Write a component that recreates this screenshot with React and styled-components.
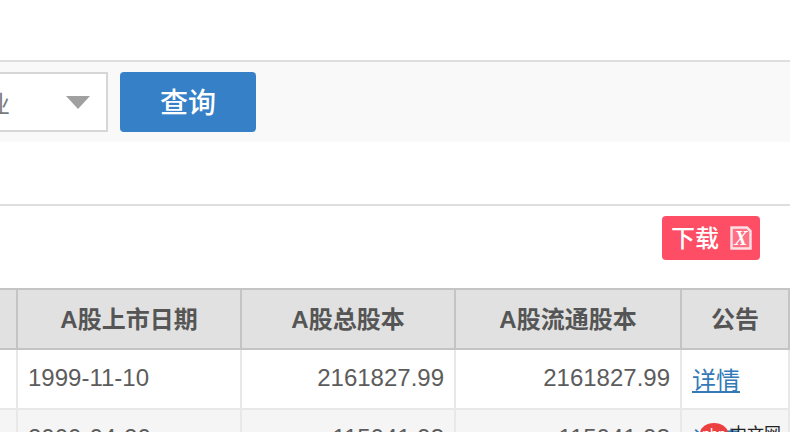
import styled, { createGlobalStyle } from "styled-components";

const GlobalStyle = createGlobalStyle`
  html, body {
    margin: 0;
    padding: 0;
    background: #fff;
    overflow: hidden;
  }
  body {
    width: 790px;
    height: 432px;
    font-family: "Liberation Sans", "Noto Sans CJK SC", sans-serif;
    color: #5c5c5c;
  }
`;

const Page = styled.div`
  position: relative;
  width: 790px;
  height: 432px;
  overflow: hidden;
`;

const TopGap = styled.div`
  height: 60px;
`;

const SearchBar = styled.div`
  display: flex;
  align-items: flex-start;
  gap: 12px;
  height: 70px;
  padding-top: 10px;
  background: #f9f9f9;
  border-top: 2px solid #dedede;
`;

const SelectBox = styled.div`
  display: flex;
  align-items: center;
  justify-content: space-between;
  box-sizing: border-box;
  flex-shrink: 0;
  width: 200px;
  height: 60px;
  margin-left: -92px;
  padding: 0 16px 0 4px;
  background: #fff;
  border: 2px solid #d6d6d6;
  font-size: 24px;
  color: #7a7a7a;
`;

const Arrow = styled.span`
  width: 0;
  height: 0;
  border-left: 12px solid transparent;
  border-right: 12px solid transparent;
  border-top: 13px solid #a0a0a0;
`;

const SearchButton = styled.button`
  width: 136px;
  height: 60px;
  padding: 0 0 2px;
  border: 0;
  border-radius: 4px;
  background: #3580c6;
  color: #fff;
  font-family: inherit;
  font-size: 28px;
  font-weight: 500;
`;

const ActionBar = styled.div`
  display: flex;
  justify-content: flex-end;
  height: 70px;
  margin-top: 62px;
  padding: 10px 30px 0 0;
  border-top: 2px solid #dedede;
`;

const DownloadButton = styled.button`
  display: flex;
  align-items: center;
  gap: 11px;
  height: 44px;
  padding: 0 8px 0 9px;
  border: 0;
  border-radius: 4px;
  background: #fe4e66;
  color: #fff;
  font-family: inherit;
  font-size: 24px;
  font-weight: 500;
`;

const DownloadLabel = styled.span`
  margin-top: -3px;
`;

const TableWrap = styled.div`
  display: flex;
  justify-content: flex-end;
  margin-top: 2px;
`;

const Table = styled.table`
  flex-shrink: 0;
  width: 983px;
  table-layout: fixed;
  border-collapse: collapse;
  font-size: 24px;
`;

const HeadCell = styled.th`
  height: 55px;
  padding: 0 0 3px;
  background: #e1e1e1;
  border: 2px solid #c4c4c4;
  color: #555;
  font-weight: 700;
  text-align: center;
`;

const Cell = styled.td`
  height: 56px;
  padding: 0 10px 2px;
  border: 2px solid #e8e8e8;
  text-align: ${(p) => (p.$right ? "right" : "left")};
  background: ${(p) => (p.$alt ? "#f5f5f5" : "#fff")};
`;

const DetailLink = styled.a`
  color: #337ab7;
  text-decoration: underline;
`;

const Watermark = styled.div`
  position: absolute;
  left: 700px;
  top: 423px;
  display: flex;
  align-items: flex-start;
  gap: 2px;
  font-family: "Noto Sans CJK SC", sans-serif;
  font-size: 17px;
  line-height: 20px;
  color: #222;
`;

const WatermarkPill = styled.span`
  display: flex;
  align-items: center;
  justify-content: center;
  width: 28px;
  height: 21px;
  border-radius: 50%;
  background: #ec3f3f;
  color: #fff;
  font-family: "Liberation Sans", sans-serif;
  font-size: 14px;
`;

const ExcelIcon = () => (
  <svg width="22" height="24" viewBox="0 0 22 24" fill="none">
    <path d="M1.500 1.500h15.500l3.500 3.500V22.500H1.500z" fill="#fff" fillOpacity="0.2" stroke="#fff" strokeOpacity="0.8" strokeWidth="2.500" />
    <text x="11" y="18.500" textAnchor="middle" fill="#fff" fontFamily="Liberation Serif" fontStyle="italic" fontWeight="700" fontSize="20">X</text>
  </svg>
);

const rows = [
  { date: "2000-04-20", total: "115041.93", flow: "115041.93" },
];

export default function App() {
  return (
    <Page>
      <GlobalStyle />
      <TopGap />
      <SearchBar>
        <SelectBox>
          <span>全部行业</span>
          <Arrow />
        </SelectBox>
        <SearchButton>查询</SearchButton>
      </SearchBar>
      <ActionBar>
        <DownloadButton>
          <DownloadLabel>下载</DownloadLabel>
          <ExcelIcon />
        </DownloadButton>
      </ActionBar>
      <TableWrap>
        <Table>
          <colgroup>
            <col style={{ width: 211 }} />
            <col style={{ width: 224 }} />
            <col style={{ width: 214 }} />
            <col style={{ width: 226 }} />
            <col style={{ width: 108 }} />
          </colgroup>
          <thead>
            <tr>
              <HeadCell>A股简称</HeadCell>
              <HeadCell>A股上市日期</HeadCell>
              <HeadCell>A股总股本</HeadCell>
              <HeadCell>A股流通股本</HeadCell>
              <HeadCell>公告</HeadCell>
            </tr>
          </thead>
          <tbody>
            <tr>
              <Cell>浦发银行</Cell>
              <Cell>1999-11-10</Cell>
              <Cell $right>2161827.99</Cell>
              <Cell $right>2161827.99</Cell>
              <Cell><DetailLink href="#">详情</DetailLink></Cell>
            </tr>
            {rows.map((r) => (
              <tr key={r.date}>
                <Cell $alt>浦发银行</Cell>
                <Cell $alt>{r.date}</Cell>
                <Cell $alt $right>{r.total}</Cell>
                <Cell $alt $right>{r.flow}</Cell>
                <Cell $alt><DetailLink href="#">详情</DetailLink></Cell>
              </tr>
            ))}
          </tbody>
        </Table>
      </TableWrap>
      <Watermark>
        <WatermarkPill>php</WatermarkPill>
        中文网
      </Watermark>
    </Page>
  );
}
